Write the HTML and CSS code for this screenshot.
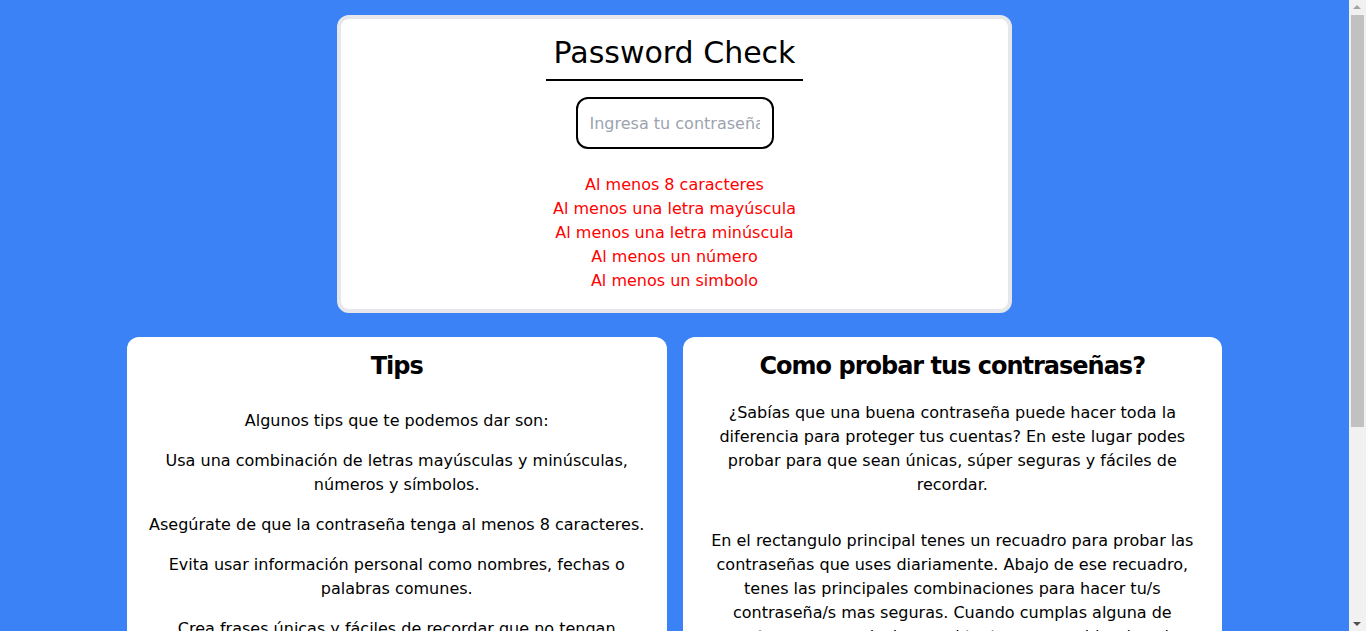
FILE: index.html
```html
<!DOCTYPE html>
<html lang="es">
<head>
<meta charset="utf-8">
<title>Password Check</title>
<link rel="stylesheet" href="styles.css">
</head>
<body>
<main class="page">
  <section class="checker">
    <h1 class="title">Password Check</h1>
    <input class="pw" type="password" placeholder="Ingresa tu contraseña">
    <ul class="reqs">
      <li>Al menos 8 caracteres</li>
      <li>Al menos una letra mayúscula</li>
      <li>Al menos una letra minúscula</li>
      <li>Al menos un número</li>
      <li>Al menos un simbolo</li>
    </ul>
  </section>
  <div class="info">
    <article class="card tips">
      <h2 class="card-title">Tips</h2>
      <div class="card-body">
        <p>Algunos tips que te podemos dar son:</p>
        <p>Usa una combinación de letras mayúsculas y minúsculas, números y símbolos.</p>
        <p>Asegúrate de que la contraseña tenga al menos 8 caracteres.</p>
        <p>Evita usar información personal como nombres, fechas o palabras comunes.</p>
        <p>Crea frases únicas y fáciles de recordar que no tengan sentido para otras personas.</p>
        <p>No uses la misma contraseña en todas tus cuentas.</p>
      </div>
    </article>
    <article class="card howto">
      <h2 class="card-title">Como probar tus contraseñas?</h2>
      <div class="card-body">
        <p>¿Sabías que una buena contraseña puede hacer toda la diferencia para proteger tus cuentas? En este lugar podes probar para que sean únicas, súper seguras y fáciles de recordar.</p>
        <p>En el rectangulo principal tenes un recuadro para probar las contraseñas que uses diariamente. Abajo de ese recuadro, tenes las principales combinaciones para hacer tu/s contraseña/s mas seguras. Cuando cumplas alguna de nuestras recomendaciones, el texto va a cambiar de color rojo a verde.</p>
      </div>
    </article>
  </div>
</main>
<div class="scrollbar" aria-hidden="true">
  <span class="sb-arrow sb-up"></span>
  <span class="sb-thumb"></span>
  <span class="sb-arrow sb-down"></span>
</div>
</body>
</html>
```
FILE: styles.css
```css
html, body {
  margin: 0;
  background: #3b82f6;
  font-family: "DejaVu Sans", "Open Sans", sans-serif;
  color: #000;
}

body {
  width: calc(100% - 17px);
}

.page {
  display: flex;
  flex-direction: column;
  align-items: center;
  gap: 24px;
  padding: 15px 0 40px;
}

.checker {
  width: 50%;
  box-sizing: border-box;
  background: #fff;
  border: 4px solid #e5e7eb;
  border-radius: 12px;
  padding: 16px 16px 16px;
  display: flex;
  flex-direction: column;
  align-items: center;
}

.title {
  margin: 0;
  padding: 0 8px 8px;
  font-size: 30px;
  line-height: 36px;
  font-weight: 400;
  border-bottom: 2px solid #000;
}

.pw {
  margin-top: 16px;
  width: 198px;
  height: 52px;
  box-sizing: border-box;
  border: 2px solid #000;
  border-radius: 12px;
  padding: 0 12px;
  font-family: "DejaVu Sans", sans-serif;
  font-size: 16px;
  outline: none;
  background: #fff;
}

.pw::placeholder {
  color: #9ca3af;
}

.reqs {
  list-style: none;
  margin: 24px 0 0;
  padding: 0;
  color: #ff0000;
  font-size: 16px;
  line-height: 24px;
  text-align: center;
}

.info {
  display: flex;
  justify-content: center;
  gap: 16px;
  width: 100%;
}

.card {
  width: 40%;
  box-sizing: border-box;
  background: #fff;
  border-radius: 12px;
  padding: 13px 20px 24px;
  text-align: center;
}

.card-title {
  margin: 0;
  font-size: 24px;
  line-height: 32px;
  font-weight: 700;
  letter-spacing: -1px;
}

.card-body {
  display: flex;
  flex-direction: column;
  font-size: 16px;
  line-height: 24px;
}

.card-body p {
  margin: 0;
}

.tips .card-body {
  padding-top: 27px;
  gap: 16px;
}

.howto .card-body {
  padding-top: 19px;
  gap: 32px;
}

/* static scrollbar, as in the captured window */
.scrollbar {
  position: fixed;
  top: 0;
  right: 0;
  width: 17px;
  height: 100vh;
  background: #f1f1f1;
}

.sb-thumb {
  position: absolute;
  top: 15px;
  left: 2px;
  width: 13px;
  height: 412px;
  background: #c1c1c1;
}

.sb-arrow {
  position: absolute;
  left: 4px;
  width: 0;
  height: 0;
  border-left: 4px solid transparent;
  border-right: 4px solid transparent;
}

.sb-up {
  top: 5px;
  border-bottom: 4px solid #a3a3a3;
}

.sb-down {
  bottom: 5px;
  border-top: 4px solid #505050;
}
```
